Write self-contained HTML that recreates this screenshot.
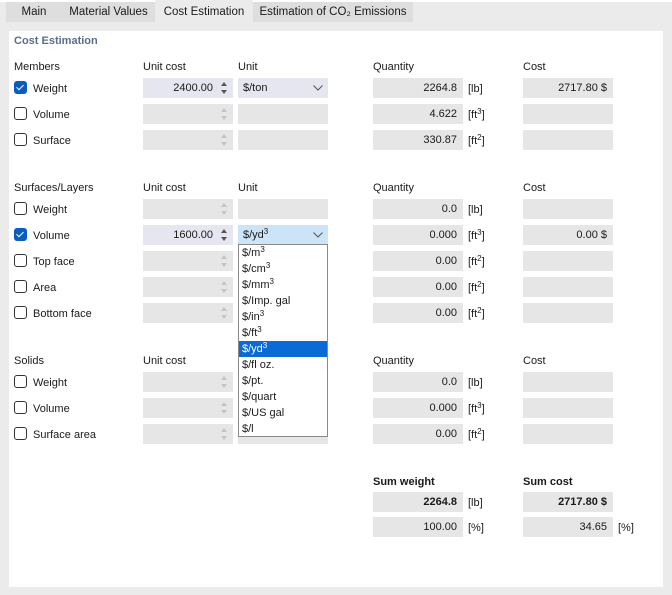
<!DOCTYPE html>
<html><head><meta charset="utf-8"><style>
*{margin:0;padding:0;box-sizing:border-box}
body{width:672px;height:595px;background:#ebebeb;font-family:"Liberation Sans",sans-serif;font-size:11px;color:#1a1a1a;position:relative;overflow:hidden}
.a{position:absolute;white-space:nowrap;line-height:14px}
.top{position:absolute;left:0;top:0;width:672px;height:2px;background:#fff}
.tab{position:absolute;top:2px;height:20px;background:#dedede;line-height:20px;text-align:center;font-size:11.5px}
.panel{position:absolute;left:9px;top:31px;width:654px;height:556px;background:#fff}
.b{position:absolute;height:20px;background:#e6e6e6;line-height:20px;text-align:right;padding-right:6px}
.bl{text-align:left;padding-left:5px}
.cb{position:absolute;left:14px;width:13px;height:13px;border:1px solid #333;border-radius:3px;background:#fff}
.cb.on{background:#0a5dbf;border-color:#0a5dbf}
.cb.on:after{content:"";position:absolute;left:3px;top:1px;width:3px;height:6px;border:solid #fff;border-width:0 1px 1px 0;transform:rotate(45deg)}
.up,.dn{position:absolute;width:0;height:0;border-left:3px solid transparent;border-right:3px solid transparent}
.up{border-bottom:4px solid #c4c4c4}.dn{border-top:4px solid #c4c4c4}
.on2 .up{border-bottom-color:#555}.on2 .dn{border-top-color:#555}
sup{font-size:8px;position:relative;top:-4px;vertical-align:baseline;line-height:0}
.dd{position:absolute;left:238px;top:244px;width:90px;height:193px;background:#fff;border:1px solid #8a8a8a}
.dd div{height:16px;line-height:16px;padding-left:3px}
.sel{background:#0a6ad6;color:#fff}
.chev{position:absolute;left:75px;top:7px}
</style></head><body>
<div class="top"></div>
<div class="tab" style="left:6px;width:56px">Main</div>
<div class="tab" style="left:62px;width:93px">Material Values</div>
<div class="tab" style="left:155px;width:98px;top:0;height:22px;background:#ebebeb;line-height:24px">Cost Estimation</div>
<div class="tab" style="left:253px;width:160px">Estimation of CO₂ Emissions</div>
<div class="panel"></div>
<div class="a" style="left:14px;top:34px;color:#5a6e8c;font-weight:bold;font-size:11px">Cost Estimation</div>

<div class="a" style="left:14px;top:60px">Members</div>
<div class="a" style="left:143px;top:60px">Unit cost</div>
<div class="a" style="left:238px;top:60px">Unit</div>
<div class="a" style="left:373px;top:60px">Quantity</div>
<div class="a" style="left:523px;top:60px">Cost</div>

<div class="a" style="left:14px;top:181px">Surfaces/Layers</div>
<div class="a" style="left:143px;top:181px">Unit cost</div>
<div class="a" style="left:238px;top:181px">Unit</div>
<div class="a" style="left:373px;top:181px">Quantity</div>
<div class="a" style="left:523px;top:181px">Cost</div>

<div class="a" style="left:14px;top:354px">Solids</div>
<div class="a" style="left:143px;top:354px">Unit cost</div>
<div class="a" style="left:373px;top:354px">Quantity</div>
<div class="a" style="left:523px;top:354px">Cost</div>

<div class="cb on" style="top:81px"></div><div class="a" style="left:33px;top:82px">Weight</div>
<div class="b on2" style="left:143px;top:78px;width:90px;background:#e6e6f0;padding-right:20px">2400.00<div class="up" style="left:78px;top:4px"></div><div class="dn" style="left:78px;top:12px"></div></div>
<div class="b bl" style="left:238px;top:78px;width:90px;background:#e6e6f0">$/ton<svg class="chev" width="10" height="6"><path d="M0.5 0.5L5 5L9.5 0.5" fill="none" stroke="#555"/></svg></div>
<div class="b" style="left:373px;top:78px;width:90px">2264.8</div><div class="a" style="left:468px;top:82px">[lb]</div>
<div class="b" style="left:523px;top:78px;width:90px">2717.80 $</div>

<div class="cb" style="top:107px"></div><div class="a" style="left:33px;top:108px">Volume</div>
<div class="b" style="left:143px;top:104px;width:90px"><div class="up" style="left:78px;top:4px"></div><div class="dn" style="left:78px;top:12px"></div></div>
<div class="b" style="left:238px;top:104px;width:90px"></div>
<div class="b" style="left:373px;top:104px;width:90px">4.622</div><div class="a" style="left:468px;top:108px">[ft<sup>3</sup>]</div>
<div class="b" style="left:523px;top:104px;width:90px"></div>

<div class="cb" style="top:133px"></div><div class="a" style="left:33px;top:134px">Surface</div>
<div class="b" style="left:143px;top:130px;width:90px"><div class="up" style="left:78px;top:4px"></div><div class="dn" style="left:78px;top:12px"></div></div>
<div class="b" style="left:238px;top:130px;width:90px"></div>
<div class="b" style="left:373px;top:130px;width:90px">330.87</div><div class="a" style="left:468px;top:134px">[ft<sup>2</sup>]</div>
<div class="b" style="left:523px;top:130px;width:90px"></div>

<div class="cb" style="top:202px"></div><div class="a" style="left:33px;top:203px">Weight</div>
<div class="b" style="left:143px;top:199px;width:90px"><div class="up" style="left:78px;top:4px"></div><div class="dn" style="left:78px;top:12px"></div></div>
<div class="b" style="left:238px;top:199px;width:90px"></div>
<div class="b" style="left:373px;top:199px;width:90px">0.0</div><div class="a" style="left:468px;top:203px">[lb]</div>
<div class="b" style="left:523px;top:199px;width:90px"></div>

<div class="cb on" style="top:228px"></div><div class="a" style="left:33px;top:229px">Volume</div>
<div class="b on2" style="left:143px;top:225px;width:90px;background:#e6e6f0;padding-right:20px">1600.00<div class="up" style="left:78px;top:4px"></div><div class="dn" style="left:78px;top:12px"></div></div>
<div class="b bl" style="left:238px;top:225px;width:90px;background:#cce4f7">$/yd<sup>3</sup><svg class="chev" width="10" height="6"><path d="M0.5 0.5L5 5L9.5 0.5" fill="none" stroke="#555"/></svg></div>
<div class="b" style="left:373px;top:225px;width:90px">0.000</div><div class="a" style="left:468px;top:229px">[ft<sup>3</sup>]</div>
<div class="b" style="left:523px;top:225px;width:90px">0.00 $</div>

<div class="cb" style="top:254px"></div><div class="a" style="left:33px;top:255px">Top face</div>
<div class="b" style="left:143px;top:251px;width:90px"><div class="up" style="left:78px;top:4px"></div><div class="dn" style="left:78px;top:12px"></div></div>
<div class="b" style="left:373px;top:251px;width:90px">0.00</div><div class="a" style="left:468px;top:255px">[ft<sup>2</sup>]</div>
<div class="b" style="left:523px;top:251px;width:90px"></div>

<div class="cb" style="top:280px"></div><div class="a" style="left:33px;top:281px">Area</div>
<div class="b" style="left:143px;top:277px;width:90px"><div class="up" style="left:78px;top:4px"></div><div class="dn" style="left:78px;top:12px"></div></div>
<div class="b" style="left:373px;top:277px;width:90px">0.00</div><div class="a" style="left:468px;top:281px">[ft<sup>2</sup>]</div>
<div class="b" style="left:523px;top:277px;width:90px"></div>

<div class="cb" style="top:306px"></div><div class="a" style="left:33px;top:307px">Bottom face</div>
<div class="b" style="left:143px;top:303px;width:90px"><div class="up" style="left:78px;top:4px"></div><div class="dn" style="left:78px;top:12px"></div></div>
<div class="b" style="left:373px;top:303px;width:90px">0.00</div><div class="a" style="left:468px;top:307px">[ft<sup>2</sup>]</div>
<div class="b" style="left:523px;top:303px;width:90px"></div>

<div class="cb" style="top:375px"></div><div class="a" style="left:33px;top:376px">Weight</div>
<div class="b" style="left:143px;top:372px;width:90px"><div class="up" style="left:78px;top:4px"></div><div class="dn" style="left:78px;top:12px"></div></div>
<div class="b" style="left:373px;top:372px;width:90px">0.0</div><div class="a" style="left:468px;top:376px">[lb]</div>
<div class="b" style="left:523px;top:372px;width:90px"></div>

<div class="cb" style="top:401px"></div><div class="a" style="left:33px;top:402px">Volume</div>
<div class="b" style="left:143px;top:398px;width:90px"><div class="up" style="left:78px;top:4px"></div><div class="dn" style="left:78px;top:12px"></div></div>
<div class="b" style="left:373px;top:398px;width:90px">0.000</div><div class="a" style="left:468px;top:402px">[ft<sup>3</sup>]</div>
<div class="b" style="left:523px;top:398px;width:90px"></div>

<div class="cb" style="top:427px"></div><div class="a" style="left:33px;top:428px">Surface area</div>
<div class="b" style="left:143px;top:424px;width:90px"><div class="up" style="left:78px;top:4px"></div><div class="dn" style="left:78px;top:12px"></div></div>
<div class="b" style="left:238px;top:424px;width:90px"></div>
<div class="b" style="left:373px;top:424px;width:90px">0.00</div><div class="a" style="left:468px;top:428px">[ft<sup>2</sup>]</div>
<div class="b" style="left:523px;top:424px;width:90px"></div>

<div class="a" style="left:373px;top:475px;font-weight:bold">Sum weight</div>
<div class="a" style="left:523px;top:475px;font-weight:bold">Sum cost</div>
<div class="b" style="left:373px;top:492px;width:90px;font-weight:bold">2264.8</div><div class="a" style="left:468px;top:496px">[lb]</div>
<div class="b" style="left:523px;top:492px;width:90px;font-weight:bold">2717.80 $</div>
<div class="b" style="left:373px;top:517px;width:90px">100.00</div><div class="a" style="left:468px;top:521px">[%]</div>
<div class="b" style="left:523px;top:517px;width:90px">34.65</div><div class="a" style="left:618px;top:521px">[%]</div>

<div class="dd">
<div>$/m<sup>3</sup></div><div>$/cm<sup>3</sup></div><div>$/mm<sup>3</sup></div><div>$/Imp. gal</div><div>$/in<sup>3</sup></div><div>$/ft<sup>3</sup></div><div class="sel">$/yd<sup>3</sup></div><div>$/fl oz.</div><div>$/pt.</div><div>$/quart</div><div>$/US gal</div><div>$/l</div>
</div>
</body></html>
